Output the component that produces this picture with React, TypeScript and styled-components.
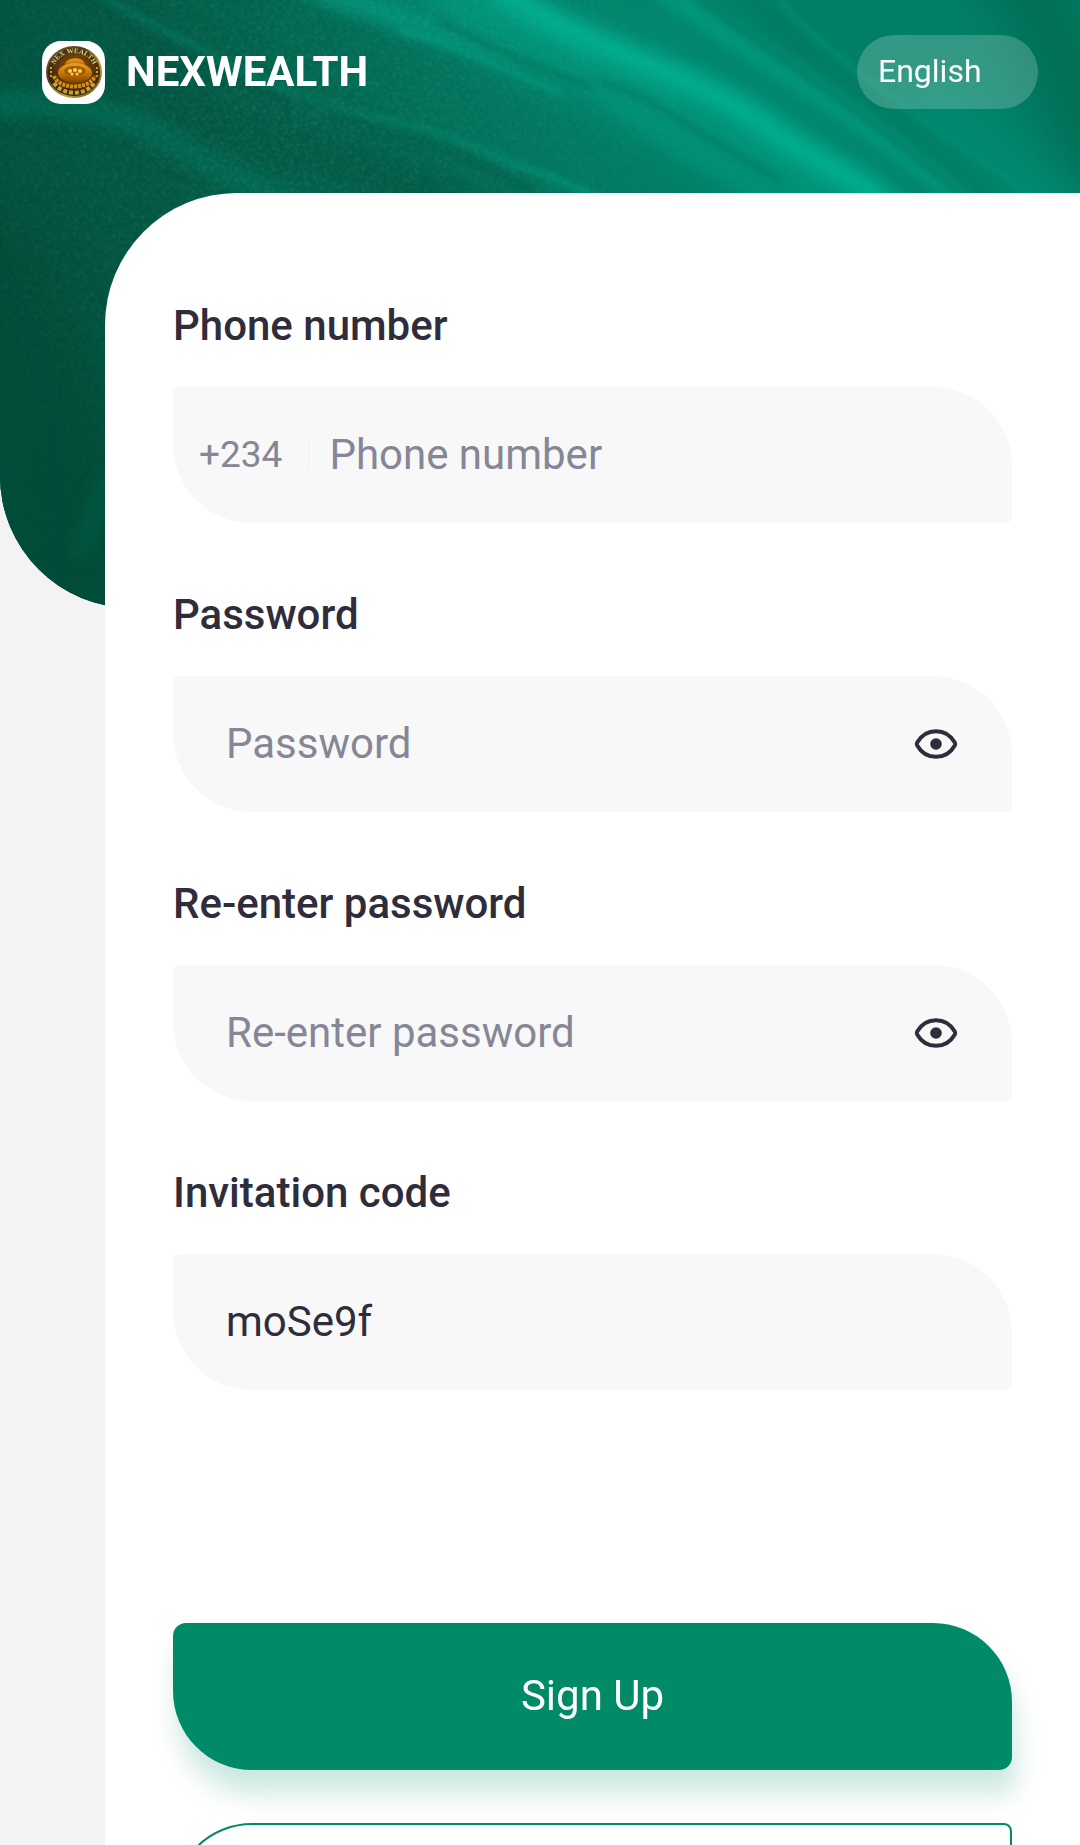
import React, { useId, useState } from "react";
import styled, { createGlobalStyle } from "styled-components";

const colors = {
  ink: "#2f2d3b",
  muted: "#858796",
  brand: "#008a68",
  field: "#f8f8f8",
  line: "#f4f4f6",
  page: "#f3f3f3",
};

const GlobalStyle = createGlobalStyle`
  *, *::before, *::after { box-sizing: border-box; }
  body {
    margin: 0;
    background: ${colors.page};
    color: ${colors.ink};
    font-family: Roboto, "Noto Sans", sans-serif;
  }
  button, input, select { font: inherit; color: inherit; }
`;

const Screen = styled.div`
  position: relative;
  display: flex;
  flex-direction: column;
  height: 100vh;
  overflow-x: hidden;
  overflow-y: auto;
  scrollbar-width: none;
`;

const Backdrop = styled.div`
  position: absolute;
  top: 0;
  left: 0;
  right: 0;
  height: 608px;
  overflow: hidden;
  border-bottom-left-radius: 132px;
  background: #00503d;

  svg {
    display: block;
    width: 100%;
    height: 100%;
  }
`;

const Header = styled.header`
  position: relative;
  flex: none;
  display: flex;
  align-items: center;
  justify-content: space-between;
  padding: 35px 42px 84px;
`;

const Brand = styled.div`
  display: flex;
  align-items: center;
  gap: 21px;
`;

const LogoTile = styled.div`
  display: grid;
  place-items: center;
  width: 63px;
  height: 63px;
  border-radius: 19px;
  background: #fff;
`;

const BrandName = styled.h1`
  margin: 0;
  color: #fff;
  font-size: 42px;
  font-weight: 700;
  line-height: 48px;
`;

const LanguageSelect = styled.select`
  appearance: none;
  width: 181px;
  height: 74px;
  padding: 0 21px 2px;
  border: 0;
  border-radius: 37px;
  background: rgba(255, 255, 255, 0.2);
  color: #fff;
  font-size: 32px;

  option { color: ${colors.ink}; }
`;

const Panel = styled.main`
  position: relative;
  flex: 1 0 auto;
  margin-left: 105px;
  padding: 105px 68px 84px;
  border-top-left-radius: 132px;
  background: #fff;
`;

const Form = styled.form`
  display: flex;
  flex-direction: column;
`;

const Fields = styled.div`
  display: flex;
  flex-direction: column;
  gap: 64px;
  margin-bottom: 233px;
`;

const Field = styled.div`
  display: flex;
  flex-direction: column;
  gap: 33px;
`;

const Label = styled.label`
  font-size: 42px;
  font-weight: 500;
  line-height: 56px;
`;

const InputBox = styled.div<{ $prefixed?: boolean }>`
  display: flex;
  align-items: center;
  height: 136px;
  padding: 0 54px 0 ${(p) => (p.$prefixed ? 26 : 53)}px;
  border-radius: 6px 79px 6px 79px;
  background: ${colors.field};
`;

const DialCode = styled.span`
  padding-right: 26px;
  border-right: 2px solid ${colors.line};
  margin-right: 19px;
  color: ${colors.muted};
  font-size: 37px;
  line-height: 32px;
`;

const TextInput = styled.input`
  flex: 1;
  min-width: 0;
  height: 100%;
  padding: 0 0 2px;
  border: 0;
  outline: 0;
  background: transparent;
  font-size: 42px;

  &::placeholder {
    color: ${colors.muted};
    opacity: 1;
  }
`;

const IconButton = styled.button`
  display: grid;
  place-items: center;
  padding: 0;
  border: 0;
  background: none;
  cursor: pointer;
`;

const Actions = styled.div`
  display: flex;
  flex-direction: column;
  gap: 53px;
`;

const ActionButton = styled.button<{ $outlined?: boolean }>`
  height: 147px;
  padding: 0 0 2px;
  border: ${(p) => (p.$outlined ? `2px solid ${colors.brand}` : "0")};
  border-radius: ${(p) => (p.$outlined ? "79px 8px 79px 8px" : "13px 79px 13px 79px")};
  background: ${(p) => (p.$outlined ? "#fff" : colors.brand)};
  box-shadow: ${(p) => (p.$outlined ? "none" : "4px 24px 26px rgba(0, 138, 104, 0.2)")};
  color: ${(p) => (p.$outlined ? colors.brand : "#fff")};
  font-size: 42px;
  cursor: pointer;
`;

function SilkArtwork() {
  return (
    <svg viewBox="0 0 1080 608" preserveAspectRatio="xMidYMin slice" aria-hidden="true">
      <defs>
        <linearGradient id="base" x1="0" y1="300" x2="760" y2="-60" gradientUnits="userSpaceOnUse">
          <stop offset="0" stopColor="#004d3a" />
          <stop offset="0.3" stopColor="#005a46" />
          <stop offset="0.6" stopColor="#00725b" />
          <stop offset="0.85" stopColor="#00836a" />
          <stop offset="1" stopColor="#007f66" />
        </linearGradient>
        <linearGradient id="fold" x1="296" y1="92" x2="600" y2="200" gradientUnits="userSpaceOnUse">
          <stop offset="0" stopColor="#00735a" stopOpacity="0.5" />
          <stop offset="1" stopColor="#00957a" />
        </linearGradient>
        <filter id="soft3" x="-20%" y="-20%" width="140%" height="140%"><feGaussianBlur stdDeviation="3" /></filter>
        <filter id="soft8" x="-20%" y="-20%" width="140%" height="140%"><feGaussianBlur stdDeviation="8" /></filter>
        <filter id="soft20" x="-40%" y="-40%" width="180%" height="180%"><feGaussianBlur stdDeviation="20" /></filter>
        <filter id="grain" x="0" y="0" width="100%" height="100%">
          <feTurbulence type="fractalNoise" baseFrequency="0.45" numOctaves="2" seed="7" />
          <feColorMatrix values="0 0 0 0 0.2  0 0 0 0 0.6  0 0 0 0 0.48  3 0 0 0 -1.6" />
          <feGaussianBlur stdDeviation="0.8" />
        </filter>
        <radialGradient id="grainFade" cx="300" cy="130" r="420" gradientUnits="userSpaceOnUse">
          <stop offset="0" stopColor="#fff" />
          <stop offset="0.7" stopColor="#888" />
          <stop offset="1" stopColor="#222" />
        </radialGradient>
        <mask id="grainMask"><rect width="1080" height="608" fill="url(#grainFade)" /></mask>
      </defs>
      <rect width="1080" height="608" fill="url(#base)" />
      <g fill="none" strokeLinecap="round">
        <g filter="url(#soft20)">
          <path d="M430 -20C570 60 740 110 900 240" stroke="#009479" strokeWidth="76" />
          <path d="M1010 -30C1080 40 1060 120 1140 200" stroke="#006f59" strokeWidth="80" />
          <path d="M930 100C990 150 1020 180 1070 210" stroke="#008a6f" strokeWidth="46" />
          <path d="M180 110C300 150 420 180 500 230" stroke="#005543" strokeWidth="44" />
          <path d="M-20 40C20 90 90 90 160 70" stroke="#005340" strokeWidth="50" />
          <path d="M-10 260C40 300 60 440 60 620" stroke="#004b38" strokeWidth="80" />
        </g>
        <g filter="url(#soft8)">
          <path d="M360 -20C500 60 600 90 760 210" stroke="#007c63" strokeWidth="18" />
          <path d="M300 -20C400 30 520 40 590 86S700 160 780 205" stroke="#009077" strokeWidth="22" />
          <path d="M500 -10C580 50 690 70 760 122S850 170 890 210" stroke="#00aa8d" strokeWidth="26" />
          <path d="M650 -20C740 50 860 110 980 215" stroke="#00987d" strokeWidth="24" />
          <path d="M590 -10C690 50 780 100 900 190" stroke="#00886e" strokeWidth="10" />
          <path d="M745 -10C790 60 900 120 1000 215" stroke="#007a60" strokeWidth="14" />
          <path d="M-20 104C80 102 130 114 180 146S250 180 310 215" stroke="#006b54" strokeWidth="22" opacity="0.8" />
          <path d="M110 480C95 500 90 530 80 550" stroke="#005f4a" strokeWidth="16" opacity="0.6" />
        </g>
        <g filter="url(#soft3)">
          <path d="M100 -5C190 45 240 70 296 93" stroke="#007960" strokeWidth="6" opacity="0.7" />
          <path d="M90 8C180 56 240 82 290 104" stroke="#005340" strokeWidth="8" opacity="0.6" />
          <path d="M296 92C370 122 420 120 468 144S550 172 600 200" stroke="url(#fold)" strokeWidth="6" />
          <path d="M330 116C400 140 440 140 530 190" stroke="#005b48" strokeWidth="10" opacity="0.6" />
          <path d="M400 31C450 40 500 70 560 92" stroke="#009a7e" strokeWidth="6" opacity="0.8" />
          <path d="M440 22C500 50 530 66 590 86" stroke="#007b62" strokeWidth="7" />
          <path d="M600 82C650 94 690 130 780 180" stroke="#008066" strokeWidth="6" />
          <path d="M700 0C790 70 850 100 960 194" stroke="#007f65" strokeWidth="5" />
          <path d="M780 0C830 60 920 115 1030 194" stroke="#008e73" strokeWidth="6" opacity="0.8" />
          <path d="M520 0C600 50 690 75 760 124S850 170 880 198" stroke="#00b092" strokeWidth="7" opacity="0.5" />
        </g>
      </g>
      <g mask="url(#grainMask)">
        <rect width="1080" height="608" filter="url(#grain)" opacity="0.5" />
      </g>
    </svg>
  );
}

function CoinLogo() {
  return (
    <svg width="56" height="54" viewBox="0 0 56 54" role="img" aria-label="Nex Wealth coin">
      <defs>
        <radialGradient id="coinFace" cx="0.52" cy="0.42" r="0.6">
          <stop offset="0" stopColor="#9a5a0a" />
          <stop offset="0.55" stopColor="#5a360b" />
          <stop offset="1" stopColor="#2a2110" />
        </radialGradient>
        <linearGradient id="coinRim" x1="0" y1="0" x2="1" y2="1">
          <stop offset="0" stopColor="#7d6829" />
          <stop offset="0.35" stopColor="#4c3f1c" />
          <stop offset="0.65" stopColor="#c9a23c" />
          <stop offset="1" stopColor="#5b450f" />
        </linearGradient>
        <linearGradient id="pot" x1="0" y1="0" x2="0" y2="1">
          <stop offset="0" stopColor="#e8a11e" />
          <stop offset="0.5" stopColor="#c8760a" />
          <stop offset="1" stopColor="#7b4006" />
        </linearGradient>
        <path id="coinArc" d="M8 25A20 17 0 0 1 48 25" />
      </defs>
      <ellipse cx="28" cy="27" rx="27" ry="25" fill="url(#coinFace)" stroke="url(#coinRim)" strokeWidth="2" />
      <path d="M20 17C24 12 35 12 38 17L41 23H17Z" fill="url(#pot)" />
      <ellipse cx="29" cy="28" rx="17" ry="10" fill="url(#pot)" />
      <ellipse cx="29" cy="26" rx="11" ry="5" fill="#a15b08" />
      <g fill="#ffd04a">
        <circle cx="24" cy="26" r="2" /><circle cx="29" cy="25" r="2" /><circle cx="34" cy="26" r="2" />
        <circle cx="26" cy="29" r="1.5" /><circle cx="31" cy="29" r="1.5" />
      </g>
      <path d="M8 31C13 45 43 45 49 31" fill="none" stroke="#d98e1a" strokeWidth="4" strokeDasharray="3 1" />
      <path d="M8 38C17 51 40 51 48 38" fill="none" stroke="#c9a03a" strokeWidth="4" strokeDasharray="4 2" />
      <path d="M5 22V33M51 22V33" stroke="#c99a2e" strokeWidth="2" strokeDasharray="2 2" />
      <text fill="#d8c88a" fontFamily="Liberation Serif, serif" fontSize="7" fontWeight="700" textAnchor="middle">
        <textPath href="#coinArc" startOffset="50%">NEX WEALTH</textPath>
      </text>
    </svg>
  );
}

function EyeIcon() {
  return (
    <svg width="44" height="32" viewBox="0 0 44 32" aria-hidden="true">
      <path
        d="M3.2 14.5C7.5 7 14 3.2 22 3.2S36.5 7 40.8 14.5Q41.6 16 40.8 17.5C36.5 25 30 28.8 22 28.8S7.5 25 3.2 17.5Q2.4 16 3.2 14.5Z"
        fill="none"
        stroke={colors.ink}
        strokeWidth="4"
        strokeLinejoin="round"
      />
      <circle cx="22" cy="16" r="5.8" fill={colors.ink} />
    </svg>
  );
}

function PasswordField({ label }: { label: string }) {
  const id = useId();
  const [visible, setVisible] = useState(false);
  return (
    <Field>
      <Label htmlFor={id}>{label}</Label>
      <InputBox>
        <TextInput id={id} type={visible ? "text" : "password"} placeholder={label} />
        <IconButton
          type="button"
          aria-label={visible ? "Hide password" : "Show password"}
          onClick={() => setVisible(!visible)}
        >
          <EyeIcon />
        </IconButton>
      </InputBox>
    </Field>
  );
}

export default function App() {
  return (
    <>
      <GlobalStyle />
      <Screen>
        <Backdrop>
          <SilkArtwork />
        </Backdrop>
        <Header>
          <Brand>
            <LogoTile>
              <CoinLogo />
            </LogoTile>
            <BrandName>NEXWEALTH</BrandName>
          </Brand>
          <LanguageSelect aria-label="Language" defaultValue="en">
            <option value="en">English</option>
          </LanguageSelect>
        </Header>
        <Panel>
          <Form onSubmit={(e) => e.preventDefault()}>
            <Fields>
              <Field>
                <Label htmlFor="phone">Phone number</Label>
                <InputBox $prefixed>
                  <DialCode>+234</DialCode>
                  <TextInput id="phone" type="tel" placeholder="Phone number" />
                </InputBox>
              </Field>
              <PasswordField label="Password" />
              <PasswordField label="Re-enter password" />
              <Field>
                <Label htmlFor="invite">Invitation code</Label>
                <InputBox>
                  <TextInput id="invite" type="text" defaultValue="moSe9f" />
                </InputBox>
              </Field>
            </Fields>
            <Actions>
              <ActionButton type="submit">Sign Up</ActionButton>
              <ActionButton type="button" $outlined aria-label="Sign In" />
            </Actions>
          </Form>
        </Panel>
      </Screen>
    </>
  );
}
